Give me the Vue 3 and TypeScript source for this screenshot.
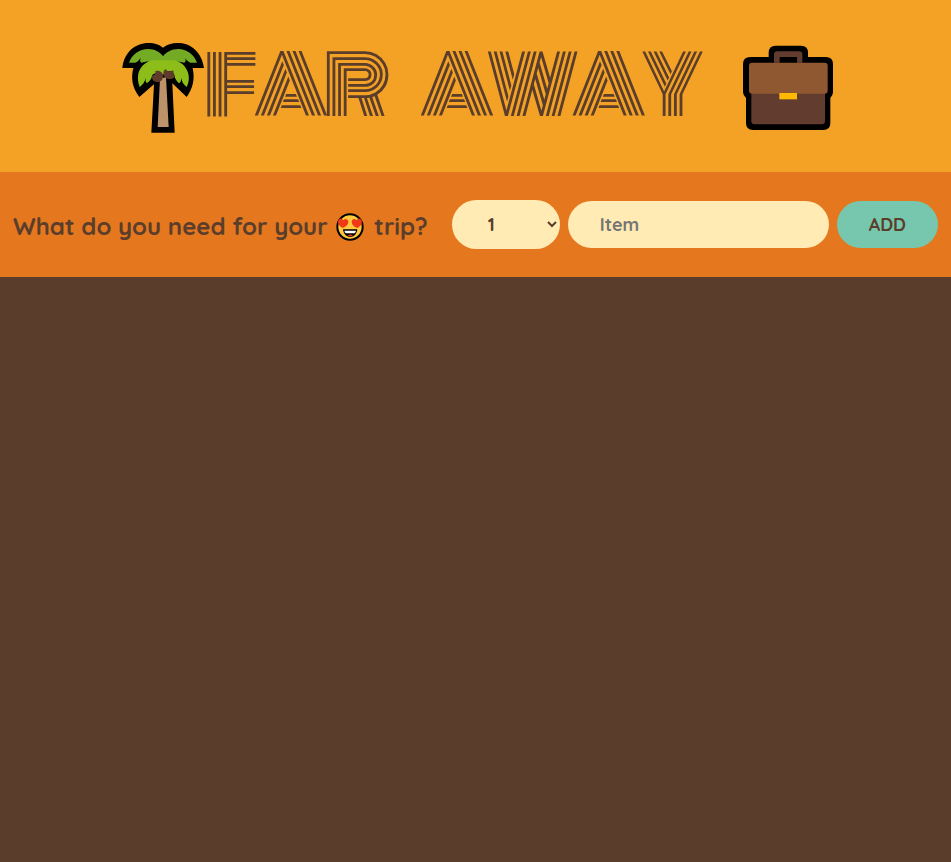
<script setup lang="ts">
import { ref } from 'vue'

const quantities: number[] = Array.from({ length: 20 }, (_, i) => i + 1)
const quantity = ref<number>(1)
const description = ref<string>('')

function addItem(): void {
  if (!description.value.trim()) return
  description.value = ''
  quantity.value = 1
}
</script>

<template>
  <div class="app">
    <header class="banner">
      <svg class="palm" viewBox="24 30 258 288" aria-hidden="true">
        <path d="M37 114C42 67 76 39 115 39C135 39 149 45 159 53C169 45 185 39 205 39C244 39 276 69 282 114H248C255 148 249 174 230 201L187 160L194 308H124L132 163L88 201C67 174 62 145 70 114Z" />
        <path d="M57 98C66 73 88 57 114 57C136 57 151 67 159 79C168 67 184 57 205 57C230 57 252 73 261 98H241C236 97 230 91 225 84Q230 94 223 98C208 96 201 92 195 97H121C113 92 108 96 94 98Q87 93 93 83C86 91 82 96 76 98Z" fill="#73ab24" />
        <path d="M89 171C79 145 84 120 99 106C107 98 117 93 130 91H191C211 94 226 107 233 125C239 141 237 157 230 171C220 163 215 156 215 145Q213 157 207 160C198 151 194 145 193 135C188 124 178 118 168 129C153 143 137 121 126 137C125 147 119 154 110 160Q105 155 107 143C105 155 99 163 89 171Z" fill="#8cbd18" />
        <path d="M150 145L168 142L176 291H143Z" fill="#bd9369" />
        <path d="M142 122C153 122 160 129 159 140C158 151 150 157 141 156C131 155 125 148 126 137Q138 137 136 123Z" fill="#5f3b2b" />
        <path d="M166 117Q173 128 190 121Q190 134 195 140C189 147 180 149 172 146C159 141 156 126 166 117Z" fill="#5f3b2b" />
      </svg>

      <h1 class="title">Far Away</h1>

      <svg class="briefcase" viewBox="42 30 270 288" aria-hidden="true">
        <path d="M119 81V68Q119 47 140 47H216Q237 47 237 68V81H290Q312 81 312 102V187Q312 195 304 204V279Q304 300 283 300H72Q51 300 51 279V204Q42 195 42 187V102Q42 81 64 81Z" />
        <path d="M135 98V74Q135 64 145 64H210Q220 64 220 74V98H204V81H152V98Z" fill="#613c2f" />
        <path d="M67 188H288V273Q288 283 278 283H77Q67 283 67 273Z" fill="#613c2f" />
        <rect x="60" y="98" width="236" height="93" rx="9" fill="#905831" />
        <rect x="151" y="189" width="53" height="19" fill="#ffb900" />
      </svg>
    </header>

    <form class="add-form" @submit.prevent="addItem">
      <h3 class="question">
        What do you need for your
        <svg class="face" viewBox="33 38 84 84" role="img" aria-label="heart eyes">
          <circle cx="75" cy="80" r="38" fill="#ffc83d" stroke="#000" stroke-width="6" />
          <path d="M53 83C43 77 37 70 40 61C43 54 51 54 55 60C61 53 69 57 70 64C70 73 62 79 53 83Z" fill="#f03a17" />
          <path d="M97 83C107 77 113 70 110 61C107 54 99 54 95 60C89 53 81 57 80 64C80 73 88 79 97 83Z" fill="#f03a17" />
          <path d="M54 87H97C95 102 87 110 76 110C64 110 56 102 54 87Z" />
          <path d="M58 91H93Q92 98 88 99H63Q59 98 58 91Z" fill="#fff" />
          <path d="M68 106Q76 99 84 106Q76 110 68 106Z" fill="#e83b22" />
        </svg>
        trip?
      </h3>
      <select v-model="quantity" class="field quantity" aria-label="Quantity">
        <option v-for="n in quantities" :key="n" :value="n">{{ n }}</option>
      </select>
      <input v-model="description" class="field item" type="text" placeholder="Item" aria-label="Item" />
      <button class="field add" type="submit">Add</button>
    </form>

    <main class="list"></main>
  </div>
</template>

<style>
body {
  margin: 0;
}
</style>

<style scoped>
.app {
  display: flex;
  flex-direction: column;
  min-height: 100vh;
  color: #5a3e2b;
  font-family: Quicksand, Inter, sans-serif;
}

.banner {
  display: flex;
  align-items: flex-start;
  justify-content: center;
  padding: 40px 0 36px;
  background: #f4a226;
}

.palm,
.briefcase {
  display: block;
  flex: none;
  height: 96px;
}

.palm {
  width: 86px;
}

.briefcase {
  width: 90px;
}

.title {
  margin: 0 44px 0 0;
  font-family: Monoton, Inter, sans-serif;
  font-size: 80px;
  font-weight: 400;
  line-height: 92px;
  letter-spacing: -5px;
  word-spacing: 30px;
  text-transform: uppercase;
  white-space: nowrap;
}

.add-form {
  display: flex;
  align-items: center;
  justify-content: center;
  gap: 8px;
  padding: 28px 0;
  background: #e5771f;
}

.question {
  flex: none;
  margin: 0 16px 0 0;
  padding-top: 2px;
  font-size: 24px;
  font-weight: 700;
  line-height: 32px;
}

.face {
  width: 28px;
  height: 28px;
  margin: 0 3px 0 2px;
  vertical-align: -6px;
}

.field {
  box-sizing: border-box;
  height: 47px;
  padding: 12px 32px;
  border: none;
  border-radius: 100px;
  background: #ffebb3;
  color: #5a3e2b;
  font-family: inherit;
  font-size: 18px;
  font-weight: 700;
}

.quantity {
  width: 108px;
  height: 49px;
}

.item {
  width: 261px;
  min-width: 0;
}

.item::placeholder {
  color: #757575;
}

.add {
  background: #76c7ad;
  text-transform: uppercase;
  cursor: pointer;
}

.list {
  flex: 1;
  background: #5a3e2b;
}
</style>
